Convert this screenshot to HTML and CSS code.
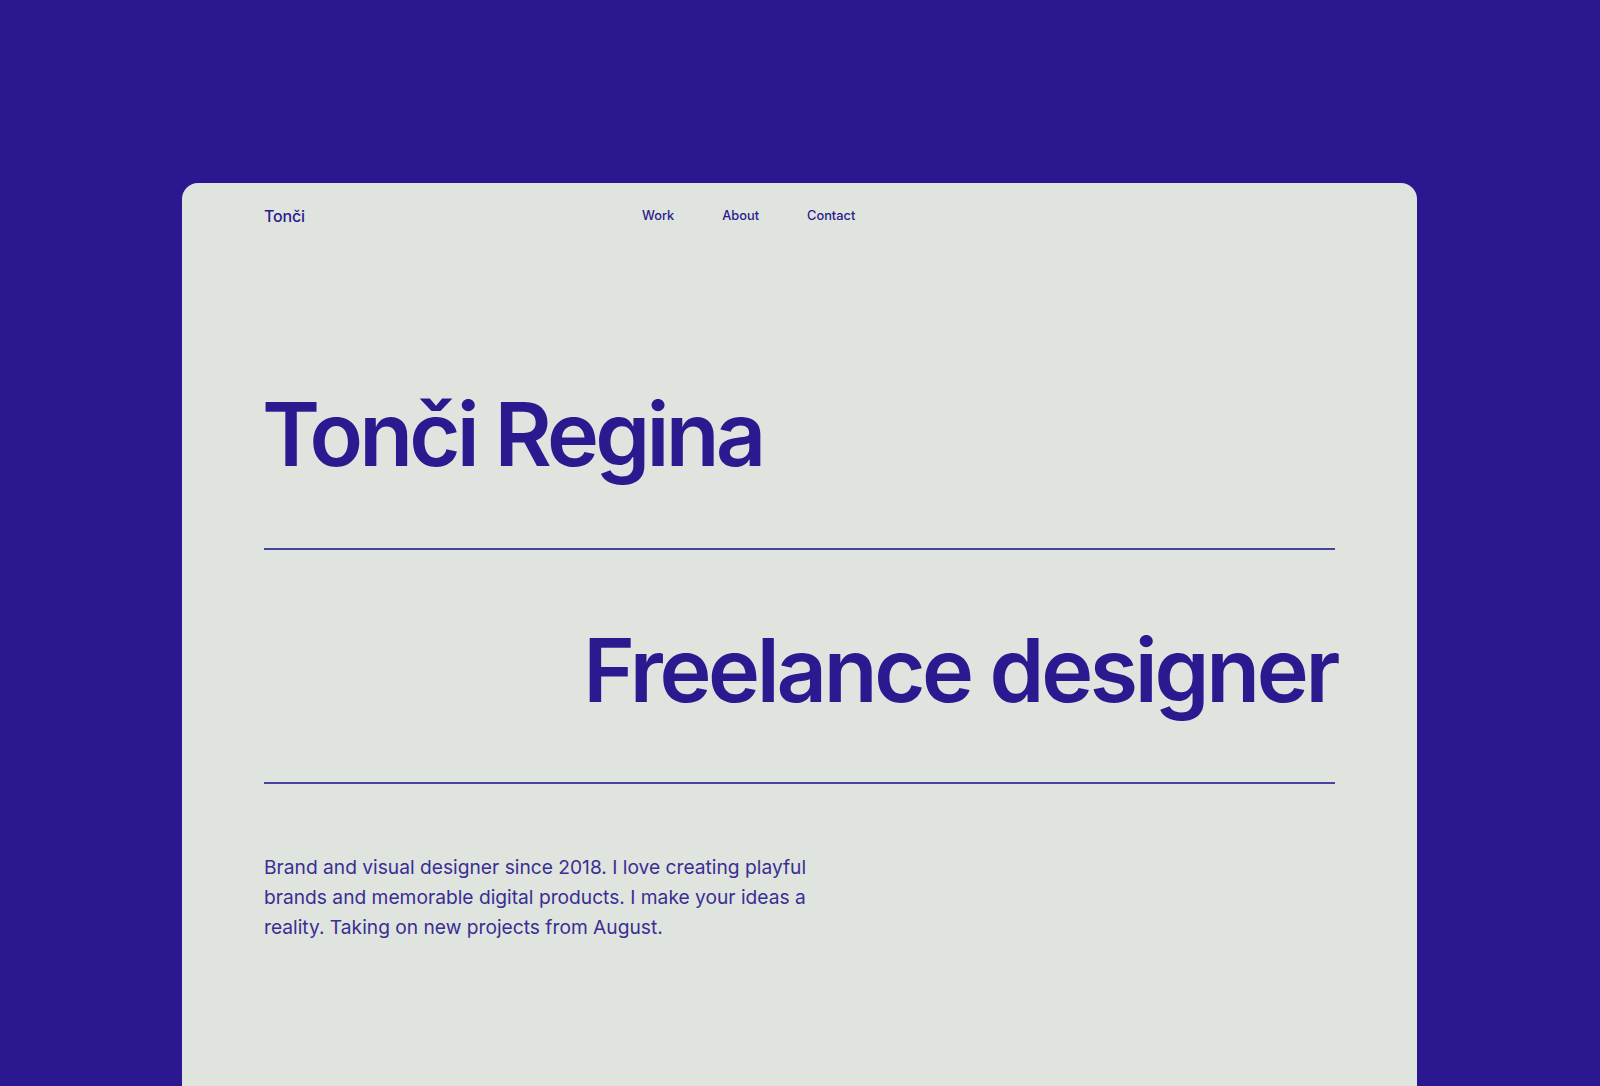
FILE: index.html
```html
<!DOCTYPE html>
<html lang="en">
<head>
<meta charset="utf-8">
<title>Tonči Regina</title>
<link rel="stylesheet" href="styles.css">
</head>
<body>
<main class="card">
  <header class="nav">
    <a class="logo" href="#">Tonči</a>
    <nav class="links">
      <a href="#">Work</a>
      <a href="#">About</a>
      <a href="#">Contact</a>
    </nav>
  </header>
  <h1 class="name">Tonči Regina</h1>
  <hr class="rule rule-one">
  <h2 class="role">Freelance designer</h2>
  <hr class="rule rule-two">
  <p class="intro">Brand and visual designer since 2018. I love creating playful brands and memorable digital products. I make your ideas a reality. Taking on new projects from August.</p>
</main>
</body>
</html>
```

FILE: styles.css
```css
* { box-sizing: border-box; }

html, body {
  margin: 0;
  padding: 0;
  height: 100%;
}

body {
  background: #2b1890;
  font-family: Inter, "Noto Sans", "Liberation Sans", sans-serif;
  color: #2b1a8f;
  overflow: hidden;
}

.card {
  margin: 183px 0 0 182px;
  width: 1235px;
  min-height: 903px;
  background: #dfe4de;
  border-radius: 16px 16px 0 0;
  padding: 24px 82px 0 82px;
  display: flex;
  flex-direction: column;
}

.nav {
  display: flex;
  align-items: center;
  height: 19px;
}

.logo {
  width: 378px;
  font-size: 16px;
  line-height: 19px;
  font-weight: 500;
  color: #2b1a8f;
  text-decoration: none;
  letter-spacing: -0.01em;
}

.links {
  display: flex;
  gap: 48px;
  margin-top: -1px;
}

.links a {
  font-size: 12.8px;
  line-height: 16px;
  font-weight: 500;
  color: #2b1a8f;
  text-decoration: none;
}

.name,
.role {
  margin: 0;
  font-size: 88px;
  line-height: 88px;
  font-weight: 600;
  letter-spacing: -0.043em;
  color: #2b1a8f;
}

.name {
  margin-top: 164px;
  margin-left: -2px;
}

.rule {
  border: 0;
  height: 2px;
  background: #4a4199;
  margin: 0;
  width: 100%;
}

.rule-one { margin-top: 70px; }

.role {
  margin-top: 76px;
  text-align: right;
  margin-right: -2px;
  letter-spacing: -0.038em;
}

.rule-two { margin-top: 68px; }

.intro {
  margin: 68px 0 0 0;
  width: 580px;
  font-size: 19.2px;
  line-height: 30px;
  font-weight: 400;
  letter-spacing: 0;
  color: #3a2e94;
}
```
